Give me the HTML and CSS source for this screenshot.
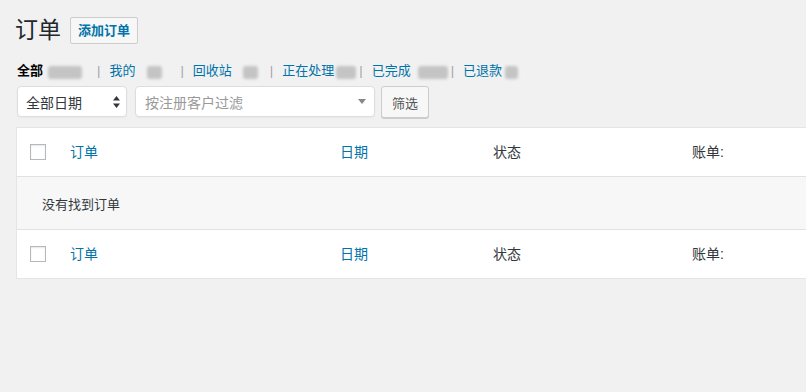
FILE: index.html
```html
<!DOCTYPE html>
<html>
<head>
    <title>订单</title>
    <meta charset="utf-8">
    <link rel="stylesheet" href="styles.css">
</head>
<body>
    <div class="wrap">
        <div class="title-row">
            <h1>订单</h1>
            <a class="page-title-action" href="#">添加订单</a>
        </div>

        <ul class="subsubsub">
            <li><a class="current" href="#">全部</a><span class="count count-all"></span></li>
            <li><span class="sep">|</span><a href="#">我的</a><span class="count count-mine"></span></li>
            <li><span class="sep">|</span><a href="#">回收站</a><span class="count count-trash"></span></li>
            <li><span class="sep">|</span><a href="#">正在处理</a><span class="count count-processing"></span></li>
            <li><span class="sep">|</span><a href="#">已完成</a><span class="count count-completed"></span></li>
            <li><span class="sep">|</span><a href="#">已退款</a><span class="count count-refunded"></span></li>
        </ul>

        <div class="tablenav">
            <div class="select">
                <span>全部日期</span>
                <svg width="7" height="12" viewBox="0 0 7 12"><path d="M3.5 0 7 4.5H0z M3.5 12 0 7.5h7z" fill="#32373c"/></svg>
            </div>
            <div class="select2">
                <span class="placeholder">按注册客户过滤</span>
                <svg width="8" height="5" viewBox="0 0 8 5"><path d="M0 0h8L4 5z" fill="#888"/></svg>
            </div>
            <button class="button">筛选</button>
        </div>

        <div class="list-table">
            <div class="row head">
                <div class="cb"><input type="checkbox"></div>
                <a class="col" href="#">订单</a>
                <a class="col" href="#">日期</a>
                <span class="col">状态</span>
                <span class="col">账单:</span>
            </div>
            <div class="row empty">
                <span>没有找到订单</span>
            </div>
            <div class="row foot">
                <div class="cb"><input type="checkbox"></div>
                <a class="col" href="#">订单</a>
                <a class="col" href="#">日期</a>
                <span class="col">状态</span>
                <span class="col">账单:</span>
            </div>
        </div>
    </div>
</body>
</html>
```

FILE: styles.css
```css
html, body {
    overflow: hidden;
}
body {
    margin: 0;
    background: #f1f1f1;
    color: #32373c;
    font-family: 'Liberation Sans', 'Noto Sans CJK SC', sans-serif;
    font-size: 13px;
}
a { color: #0073aa; text-decoration: none; }
.wrap { padding-left: 15px; }

.title-row {
    display: flex;
    align-items: center;
    margin-top: 17px;
    height: 27px;
}
h1 {
    margin: 0;
    font-size: 23px;
    font-weight: 400;
    line-height: 27px;
    color: #23282d;
}
.page-title-action {
    margin-left: 9px;
    height: 27px;
    box-sizing: border-box;
    padding: 0 7px;
    line-height: 25px;
    border: 1px solid #ccc;
    border-radius: 2px;
    background: #f7f7f7;
    font-weight: 600;
}

.subsubsub {
    list-style: none;
    margin: 18px 0 0;
    padding: 0;
    display: flex;
    height: 18px;
    line-height: 18px;
}
.subsubsub li { display: flex; align-items: center; }
.subsubsub .current { color: #000; font-weight: 600; margin-left: 2px; }
.sep { color: #a0a5aa; margin: 0 9px 0 0; }
.count {
    display: inline-block;
    height: 13px;
    background: #c4c4c4;
    filter: blur(1.5px);
    border-radius: 3px;
}
.count-all { width: 34px; margin: 3px 15px 0 5px; }
.count-mine { width: 15px; margin: 3px 18px 0 12px; }
.count-trash { width: 15px; margin: 3px 12px 0 11px; }
.count-processing { width: 20px; margin: 3px 3px 0 2px; }
.count-completed { width: 30px; margin: 3px 3px 0 7px; }
.count-refunded { width: 13px; margin: 3px 0 0 3px; }

.tablenav {
    display: flex;
    gap: 8px;
    margin-top: 6px;
    padding-left: 2px;
    height: 32px;
    align-items: flex-start;
}
.select, .select2 {
    box-sizing: border-box;
    height: 31px;
    display: flex;
    align-items: center;
    justify-content: space-between;
    background: #fff;
    border: 1px solid #ddd;
    border-radius: 4px;
    font-size: 14px;
    box-shadow: 0 1px 2px rgba(0,0,0,0.04);
}
.select { width: 110px; padding: 0 6px 0 8px; color: #32373c; }
.select2 { width: 240px; padding: 0 8px 0 9px; }
.placeholder { color: #999; }
.button {
    margin-left: -2px;
    width: 48px;
    height: 32px;
    padding: 0;
    border: 1px solid #ccc;
    border-radius: 3px;
    background: #f7f7f7;
    box-shadow: 0 1px 0 #ccc;
    color: #555;
    font-family: inherit;
    font-size: 13px;
}

.list-table {
    margin: 9px 0 0 1px;
    width: 1000px;
    background: #fff;
    border: 1px solid #e5e5e5;
    box-shadow: 0 1px 1px rgba(0,0,0,0.04);
}
.row {
    display: grid;
    grid-template-columns: 53px 270px 153px 199px 200px;
    align-items: center;
    font-size: 14px;
}
.head { height: 48px; border-bottom: 1px solid #e1e1e1; }
.foot { height: 48px; border-top: 1px solid #e1e1e1; }
.empty {
    display: flex;
    height: 52px;
    padding-left: 25px;
    background: #f7f7f7;
    font-size: 13px;
}
.cb { padding-left: 13px; display: flex; }
.cb input {
    appearance: none;
    margin: 0;
    width: 16px;
    height: 16px;
    border: 1px solid #b4b9be;
    background: #fff;
    box-shadow: inset 0 1px 2px rgba(0,0,0,0.1);
}
.col { line-height: 20px; }
```
